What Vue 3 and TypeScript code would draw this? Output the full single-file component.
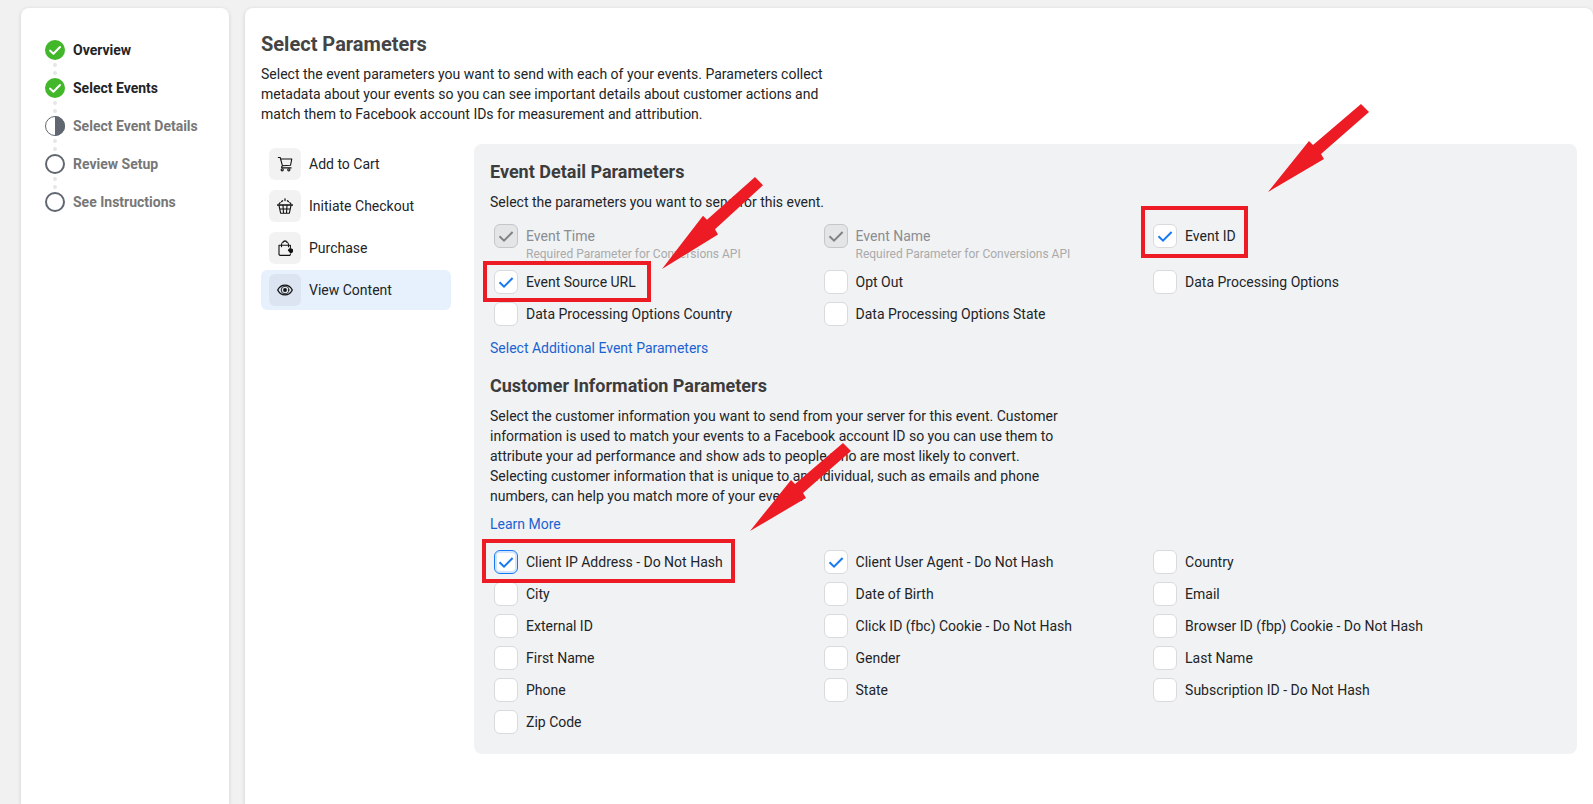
<script setup lang="ts">
import { ref } from 'vue'

type StepState = 'done' | 'current' | 'todo'

interface Step {
  label: string
  state: StepState
}

interface EventItem {
  id: string
  label: string
}

interface Option {
  id: string
  label: string
  checked?: boolean
  required?: boolean
  focused?: boolean
  callout?: string
}

const steps: Step[] = [
  { label: 'Overview', state: 'done' },
  { label: 'Select Events', state: 'done' },
  { label: 'Select Event Details', state: 'current' },
  { label: 'Review Setup', state: 'todo' },
  { label: 'See Instructions', state: 'todo' },
]

const events: EventItem[] = [
  { id: 'cart', label: 'Add to Cart' },
  { id: 'checkout', label: 'Initiate Checkout' },
  { id: 'purchase', label: 'Purchase' },
  { id: 'view', label: 'View Content' },
]

const activeEvent = ref('view')

const eventOptions = ref<Option[]>([
  { id: 'event-time', label: 'Event Time', checked: true, required: true },
  { id: 'event-name', label: 'Event Name', checked: true, required: true },
  { id: 'event-id', label: 'Event ID', checked: true, callout: 'id' },
  { id: 'source-url', label: 'Event Source URL', checked: true, callout: 'url' },
  { id: 'opt-out', label: 'Opt Out' },
  { id: 'dpo', label: 'Data Processing Options' },
  { id: 'dpo-country', label: 'Data Processing Options Country' },
  { id: 'dpo-state', label: 'Data Processing Options State' },
])

const customerOptions = ref<Option[]>([
  { id: 'client-ip', label: 'Client IP Address - Do Not Hash', checked: true, focused: true, callout: 'ip' },
  { id: 'user-agent', label: 'Client User Agent - Do Not Hash', checked: true },
  { id: 'country', label: 'Country' },
  { id: 'city', label: 'City' },
  { id: 'birth', label: 'Date of Birth' },
  { id: 'email', label: 'Email' },
  { id: 'external-id', label: 'External ID' },
  { id: 'fbc', label: 'Click ID (fbc) Cookie - Do Not Hash' },
  { id: 'fbp', label: 'Browser ID (fbp) Cookie - Do Not Hash' },
  { id: 'first-name', label: 'First Name' },
  { id: 'gender', label: 'Gender' },
  { id: 'last-name', label: 'Last Name' },
  { id: 'phone', label: 'Phone' },
  { id: 'state', label: 'State' },
  { id: 'subscription', label: 'Subscription ID - Do Not Hash' },
  { id: 'zip', label: 'Zip Code' },
])

const sections = [
  {
    id: 'event',
    title: 'Event Detail Parameters',
    text: 'Select the parameters you want to send for this event.',
    options: eventOptions,
    linkAfter: 'Select Additional Event Parameters',
  },
  {
    id: 'customer',
    title: 'Customer Information Parameters',
    text: 'Select the customer information you want to send from your server for this event. Customer information is used to match your events to a Facebook account ID so you can use them to attribute your ad performance and show ads to people who are most likely to convert. Selecting customer information that is unique to an individual, such as emails and phone numbers, can help you match more of your events.',
    options: customerOptions,
    linkBefore: 'Learn More',
  },
]
</script>

<template>
  <div class="page">
    <aside class="sidebar">
      <ol class="steps">
        <li v-for="step in steps" :key="step.label" class="step" :class="step.state">
          <svg class="step-icon" viewBox="0 0 20 20" aria-hidden="true">
            <template v-if="step.state === 'done'">
              <circle cx="10" cy="10" r="10" fill="#42b72a" />
              <path d="M5 10.6 8.4 13.8 15 7" fill="none" stroke="#fff" stroke-width="2" stroke-linecap="round" stroke-linejoin="round" />
            </template>
            <template v-else-if="step.state === 'current'">
              <circle cx="10" cy="10" r="9.5" fill="#fff" stroke="#606770" />
              <path d="M10 0a10 10 0 0 1 0 20z" fill="#606770" />
            </template>
            <circle v-else cx="10" cy="10" r="9" fill="#fff" stroke="#606770" stroke-width="2" />
          </svg>
          <span>{{ step.label }}</span>
        </li>
      </ol>
    </aside>

    <main class="main">
      <h1>Select Parameters</h1>
      <p class="copy">
        Select the event parameters you want to send with each of your events. Parameters collect metadata about your
        events so you can see important details about customer actions and match them to Facebook account IDs for
        measurement and attribution.
      </p>

      <div class="columns">
        <nav class="events">
          <button
            v-for="item in events"
            :key="item.id"
            type="button"
            class="event"
            :class="{ active: activeEvent === item.id }"
            @click="activeEvent = item.id"
          >
            <span class="event-icon">
              <svg viewBox="0 0 16 16" fill="none" stroke="#111" stroke-width="1.1" stroke-linecap="round" stroke-linejoin="round" aria-hidden="true">
                <template v-if="item.id === 'cart'">
                  <path d="M1.3 1.5h1.9l2.200 8.200-.9 1.400.6.800h9M3.600 3h11.200l-1.300 6.300-8.100.400" />
                  <circle cx="5.2" cy="13.800" r="1.1" />
                  <circle cx="11.800" cy="13.800" r="1.1" />
                </template>
                <template v-else-if="item.id === 'checkout'">
                  <path d="M.6 7h14.8" stroke-width="1.6" />
                  <path d="M2 7.400 3.600 15.200h8.800L14 7.400M2.700 11h10.600M6 7.400l.5 7.600M10 7.400l-.5 7.600" />
                  <path d="M8 .8v1.800M2.200 5.600l1-1M4.600 3.600l1-.8M13.800 5.600l-1-1M11.400 3.600l-1-.8" stroke-width="1.3" />
                </template>
                <template v-else-if="item.id === 'purchase'">
                  <path d="M13.400 7.400V5.300H2v9.200l.9.900h9.900l.6-1.200M4.500 6.800V5a3.500 3.800 0 0 1 7 0v1.800M6.400 2.200C6.400.2 9.600.2 9.600 2.200" />
                  <path d="M11.400 10.200 13 8.600l2.400.9v2.400L13.600 13z" fill="#111" />
                </template>
                <template v-else>
                  <path d="M.7 8C4 1.500 12 1.500 15.300 8 12 14.500 4 14.500.7 8z" stroke-width="1.300" />
                  <circle cx="8" cy="8" r="3.800" stroke-width=".9" />
                  <circle cx="8" cy="8" r="1.900" fill="#111" stroke="none" />
                </template>
              </svg>
            </span>
            <span>{{ item.label }}</span>
          </button>
        </nav>

        <div class="panel">
          <section v-for="section in sections" :key="section.id" class="section">
            <h2>{{ section.title }}</h2>
            <p class="copy">{{ section.text }}</p>
            <a v-if="section.linkBefore" class="link before" href="#">{{ section.linkBefore }}</a>
            <ul class="options">
              <li v-for="option in section.options.value" :key="option.id" class="option" :class="{ required: option.required }">
                <input
                  :id="option.id"
                  v-model="option.checked"
                  type="checkbox"
                  class="check"
                  :class="{ focused: option.focused }"
                  :disabled="option.required"
                />
                <svg v-if="option.checked" class="tick" viewBox="0 0 24 24" fill="none" stroke-width="2" aria-hidden="true">
                  <path d="M5.5 12.3 10 16.6 18.6 8" />
                </svg>
                <label :for="option.id">
                  {{ option.label }}
                  <small v-if="option.required">Required Parameter for Conversions API</small>
                </label>
                <template v-if="option.callout">
                  <span class="frame" :class="option.callout"></span>
                  <svg class="arrow" :class="option.callout" viewBox="0 0 101 88" preserveAspectRatio="none" aria-hidden="true">
                    <path d="M0 88 41 37 45 41 93 0 101 8 53 50 56 55z" fill="#ed1c24" />
                  </svg>
                </template>
              </li>
            </ul>
            <a v-if="section.linkAfter" class="link" href="#">{{ section.linkAfter }}</a>
          </section>
        </div>
      </div>
    </main>
  </div>
</template>

<style>
body {
  margin: 0;
  background: #f1f1f1;
}
</style>

<style scoped>
.page {
  display: flex;
  gap: 16px;
  box-sizing: border-box;
  min-height: 100vh;
  padding: 8px 0 0 21px;
  font: 14px/20px Roboto, 'Liberation Sans', sans-serif;
  color: #222427;
}

.sidebar,
.main {
  box-sizing: border-box;
  background: #fff;
  border-radius: 8px 8px 0 0;
  box-shadow: 0 1px 4px rgba(0, 0, 0, 0.14);
}

.sidebar {
  flex: 0 0 208px;
  padding: 32px 24px;
}

.steps,
.options {
  margin: 0;
  padding: 0;
  list-style: none;
}

.steps {
  display: grid;
  gap: 18px;
}

.step {
  position: relative;
  display: flex;
  gap: 8px;
  font-weight: 700;
  white-space: nowrap;
}

.step.current,
.step.todo {
  color: #777;
}

.step-icon {
  flex: none;
  width: 20px;
  height: 20px;
}

.step:not(:last-child)::before,
.step:not(:last-child)::after {
  content: '';
  position: absolute;
  top: 23px;
  left: 8px;
  width: 4px;
  height: 4px;
  border-radius: 50%;
  background: #e4e6e8;
}

.step:not(:last-child)::after {
  top: 31px;
}

.main {
  flex: 1;
  min-width: 0;
  padding: 24px 16px 50px;
}

h1,
h2,
p {
  margin: 0;
}

h1 {
  font-size: 20px;
  line-height: 24px;
  font-weight: 700;
  color: #444;
}

h2 {
  font-size: 18px;
  line-height: 24px;
  font-weight: 700;
  color: #3c3c3c;
}

.copy {
  max-width: 580px;
  margin-top: 8px;
}

.columns {
  display: flex;
  align-items: flex-start;
  gap: 23px;
  margin-top: 20px;
}

.events {
  flex: 0 0 190px;
  display: grid;
  gap: 2px;
}

.event {
  display: flex;
  align-items: center;
  gap: 8px;
  height: 40px;
  padding: 0 8px;
  border: 0;
  border-radius: 6px;
  background: none;
  font: inherit;
  color: inherit;
  text-align: left;
}

.event.active {
  background: #e7f1fd;
}

.event-icon {
  display: grid;
  place-items: center;
  width: 32px;
  height: 32px;
  border-radius: 6px;
  background: rgba(0, 0, 0, 0.05);
}

.event-icon svg {
  width: 16px;
  height: 16px;
}

.panel {
  flex: 1;
  display: grid;
  gap: 16px;
  min-width: 0;
  padding: 16px 16px 8px;
  border-radius: 8px;
  background: #f1f2f4;
}

.options {
  display: grid;
  grid-template-columns: repeat(3, 4fr) 1fr;
  row-gap: 8px;
  margin: 12px 0;
}

.link.before + .options {
  margin: 16px 0 12px;
}

.option {
  position: relative;
  display: flex;
  gap: 8px;
  padding-left: 4px;
}

.option:nth-child(3n + 1) {
  grid-column: 1;
}

.option label {
  padding: 2px 0;
  white-space: nowrap;
}

.option.required label {
  padding-bottom: 0;
  color: #8a8d91;
}

.option small {
  display: block;
  font-size: 12px;
  line-height: 16px;
  color: #aaa;
}

.check {
  flex: none;
  appearance: none;
  width: 24px;
  height: 24px;
  margin: 0;
  border: 1px solid #d8dadd;
  border-radius: 6px;
  background: #fff;
}

.check:disabled {
  border-color: #c4c6c9;
  background: #e4e5e7;
}

.check.focused {
  border-color: #1877f2;
  box-shadow: inset 0 0 0 2px #d3e5fc;
}

.tick {
  position: absolute;
  top: 0;
  left: 4px;
  width: 24px;
  height: 24px;
  stroke: #1877f2;
  pointer-events: none;
}

.required .tick {
  stroke: #808285;
}

.link {
  display: block;
  width: fit-content;
  color: #1b62d1;
  text-decoration: none;
}

.link.before {
  margin-top: 8px;
}

.frame {
  position: absolute;
  z-index: 1;
  box-sizing: border-box;
  border: 4px solid #ed1c24;
  pointer-events: none;
}

.frame.url {
  top: -9px;
  left: -7px;
  width: 168px;
  height: 41px;
}

.frame.id {
  top: -18px;
  left: -8px;
  width: 107px;
  height: 52px;
}

.frame.ip {
  top: -11px;
  left: -8px;
  width: 253px;
  height: 44px;
}

.arrow {
  position: absolute;
  z-index: 1;
  width: 101px;
  height: 88px;
  pointer-events: none;
}

.arrow.url {
  top: -93px;
  left: 172px;
  height: 92px;
}

.arrow.id {
  top: -120px;
  left: 119px;
}

.arrow.ip {
  top: -107px;
  left: 260px;
}
</style>
